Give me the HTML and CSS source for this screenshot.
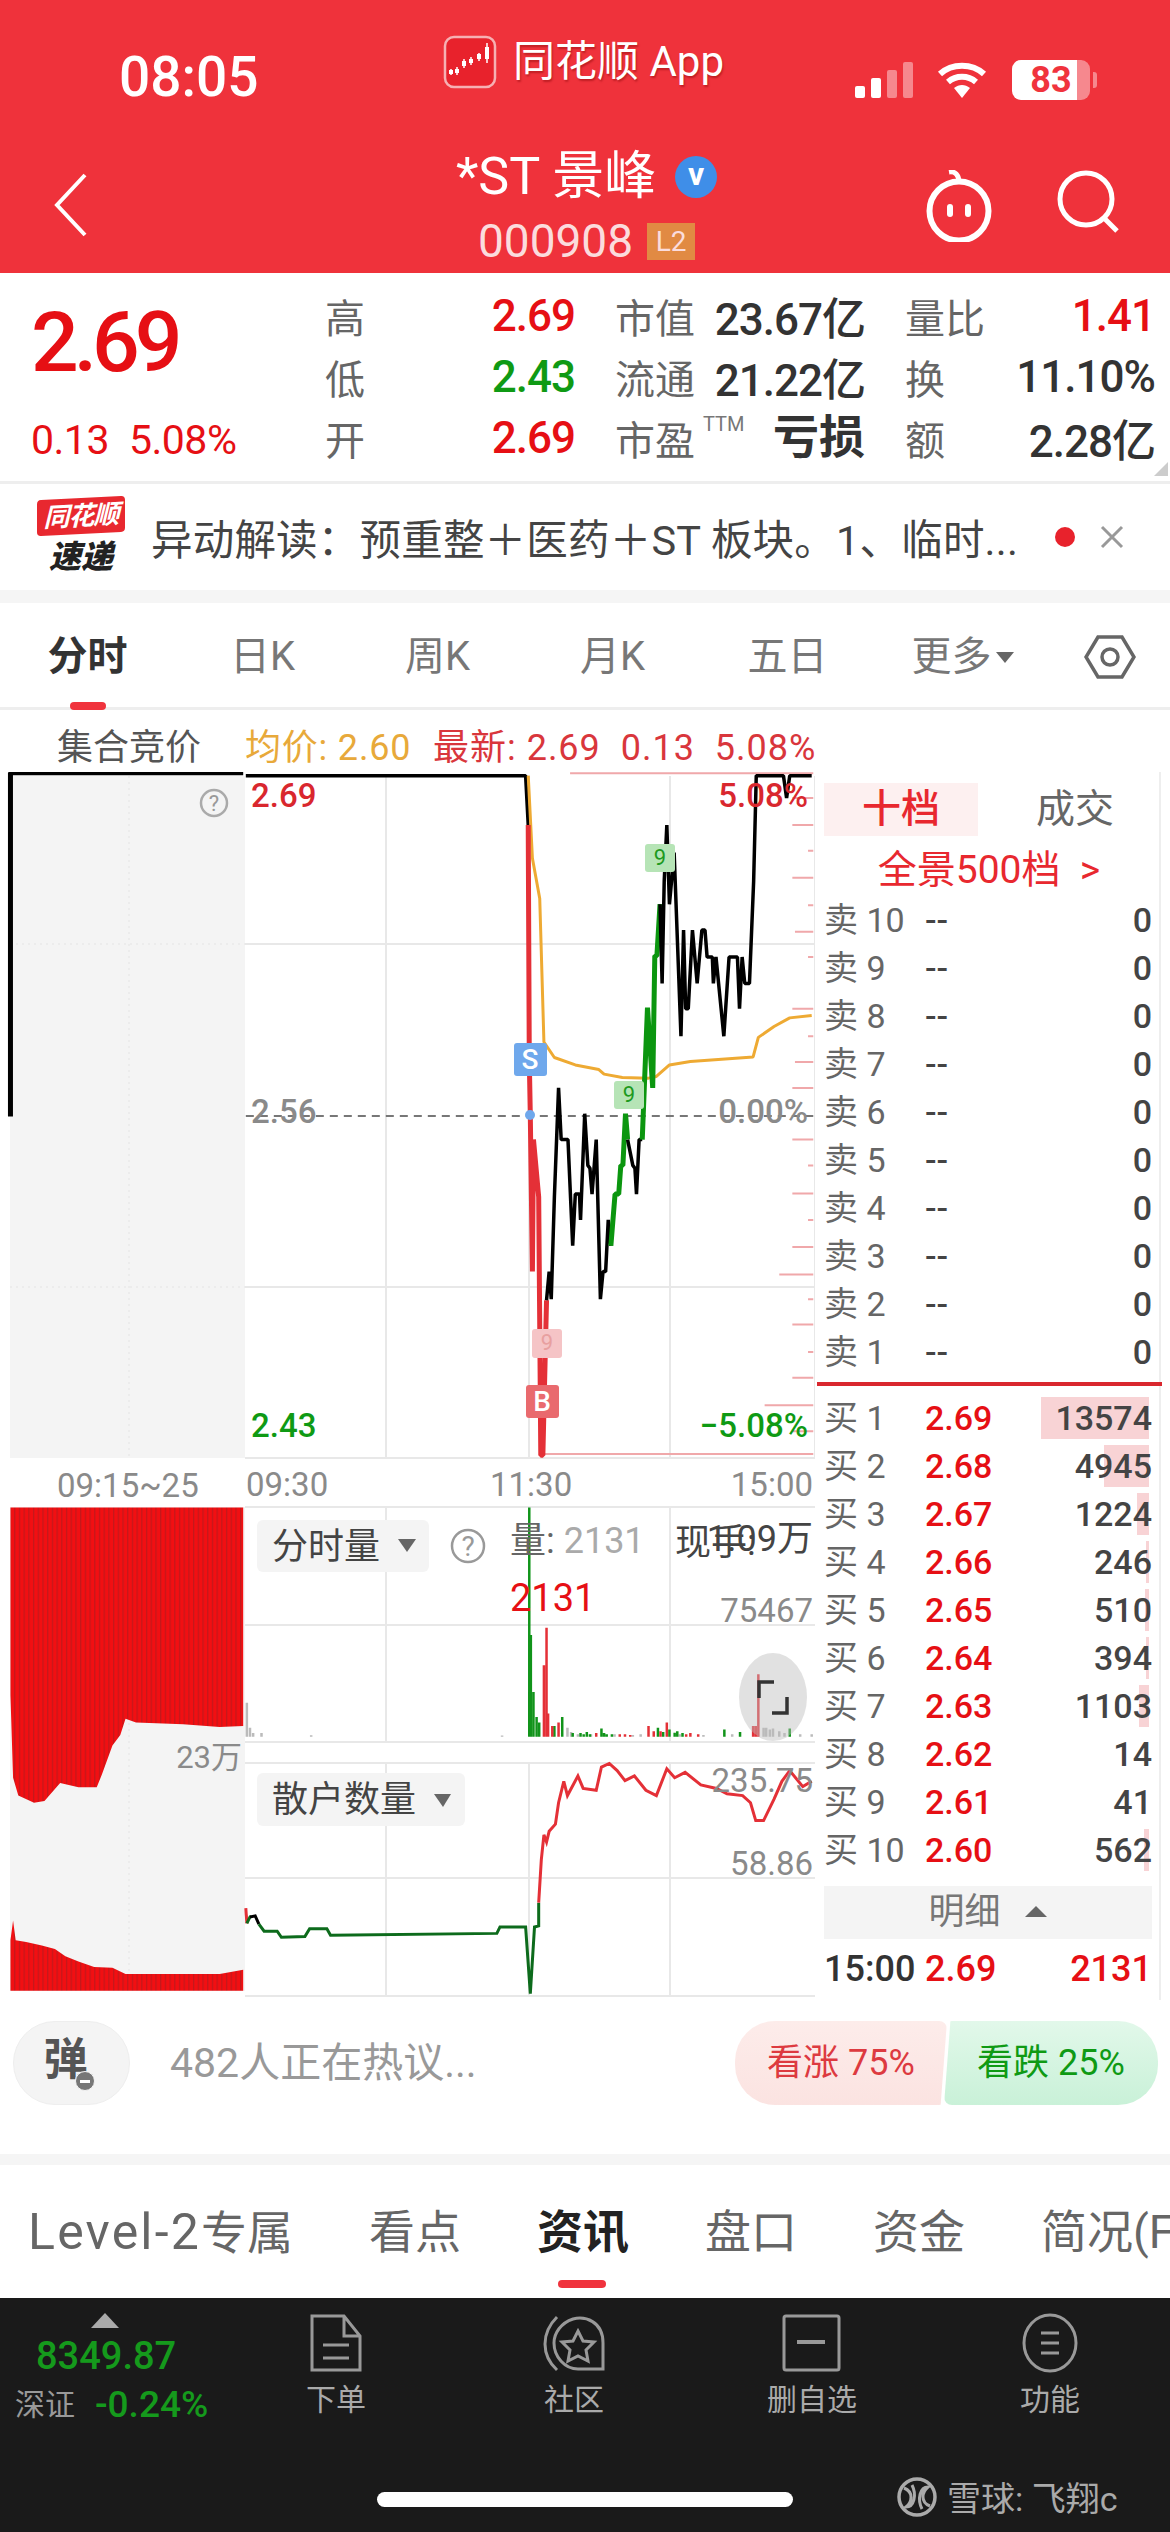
FILE: index.html
```html
<!DOCTYPE html>
<html lang="zh">
<head>
    <meta charset="utf-8" />
    <meta name="viewport" content="width=device-width, initial-scale=1" />
    <title>*ST景峰</title>
    <link rel="stylesheet" href="styles.css">
</head>
<body>
<div class="page">
    <header class="header">
        <div class="statusbar">
            <span class="clock">08:05</span>
            <div class="source">
                <svg class="source-logo" width="54" height="54" viewBox="0 0 54 54">
                    <rect x="2" y="2" width="50" height="50" rx="9" fill="#e8222c" stroke="#f6b0b3" stroke-width="2.5"/>
                    <path d="M8 34v6M14 32v8M21 24v9M28 22v8M36 18v8M44 8v20" stroke="#fff" stroke-width="1.5"/>
                    <path d="M6 35h4v4H6zM12 34h4v4h-4zM19 26h4v5h-4zM26 24h4v4h-4zM34 19h4v5h-4zM42 12h4v12h-4z" fill="#fff"/>
                </svg>
                <span class="source-name">同花顺 App</span>
            </div>
            <div class="status-icons">
                <svg width="58" height="36" viewBox="0 0 58 36">
                    <rect x="0" y="24" width="10" height="12" rx="2" fill="#fff"/>
                    <rect x="16" y="16" width="10" height="20" rx="2" fill="#fff"/>
                    <rect x="32" y="8" width="10" height="28" rx="2" fill="#f6888e"/>
                    <rect x="48" y="0" width="10" height="36" rx="2" fill="#f6888e"/>
                </svg>
                <svg class="wifi" width="50" height="38" viewBox="0 0 50 38">
                    <path d="M3 13C15 2 35 2 47 13M11 21c8-7 20-7 28 0" fill="none" stroke="#fff" stroke-width="6"/>
                    <path d="M17 27c5-4 11-4 16 0l-8 10z" fill="#fff"/>
                </svg>
                <div class="battery"><span class="battery-num">83</span></div>
            </div>
        </div>
        <div class="navbar">
            <svg class="back" width="36" height="66" viewBox="0 0 36 66">
                <path d="M32 3L4 33l28 30" fill="none" stroke="#fff" stroke-width="4"/>
            </svg>
            <div class="stock">
                <div class="stock-name">*ST 景峰 <span class="vbadge">v</span></div>
                <div class="stock-code">000908 <span class="l2">L2</span></div>
            </div>
            <svg class="robot" width="70" height="72" viewBox="0 0 70 72">
                <path d="M25 2c6-1 10 3 10 10" fill="none" stroke="#fff" stroke-width="5"/>
                <circle cx="35" cy="41" r="29.5" fill="none" stroke="#fff" stroke-width="6"/>
                <rect x="23" y="34" width="6" height="13" rx="3" fill="#fff"/>
                <rect x="41" y="34" width="6" height="13" rx="3" fill="#fff"/>
            </svg>
            <svg class="search" width="64" height="64" viewBox="0 0 64 64">
                <circle cx="30" cy="29" r="26" fill="none" stroke="#fff" stroke-width="5"/>
                <path d="M47 47l14 14" stroke="#fff" stroke-width="5"/>
            </svg>
        </div>
    </header>

    <section class="quote">
        <div class="quote-main">
            <div class="quote-price">2.69</div>
            <div class="quote-change"><span>0.13</span><span>5.08%</span></div>
        </div>
        <div class="quote-grid">
            <div class="cell"><span>高</span><b class="up">2.69</b></div>
            <div class="cell"><span>市值</span><b>23.67亿</b></div>
            <div class="cell"><span>量比</span><b class="up">1.41</b></div>
            <div class="cell"><span>低</span><b class="down">2.43</b></div>
            <div class="cell"><span>流通</span><b>21.22亿</b></div>
            <div class="cell"><span>换</span><b>11.10%</b></div>
            <div class="cell"><span>开</span><b class="up">2.69</b></div>
            <div class="cell"><span>市盈<sup class="ttm">TTM</sup></span><b class="loss">亏损</b></div>
            <div class="cell"><span>额</span><b>2.28亿</b></div>
        </div>
        <div class="corner"></div>
    </section>

    <section class="news">
        <div class="news-logo">
            <div class="news-flag">同花顺</div>
            <div class="news-speed">速递</div>
        </div>
        <div class="news-text">异动解读：预重整＋医药＋ST 板块。1、临时...</div>
        <span class="news-dot"></span>
        <svg class="news-close" width="24" height="24" viewBox="0 0 24 24">
            <path d="M2 2l20 20M22 2L2 22" stroke="#999" stroke-width="3"/>
        </svg>
    </section>
    <div class="gap"></div>

    <nav class="tabs">
        <a class="tab active">分时</a>
        <a class="tab">日K</a>
        <a class="tab">周K</a>
        <a class="tab">月K</a>
        <a class="tab">五日</a>
        <a class="tab">更多<i class="caret"></i></a>
        <a class="tab tab-icon">
            <svg width="52" height="46" viewBox="0 0 52 46">
                <path d="M14 3h24l12 20-12 20H14L2 23z" fill="none" stroke="#666" stroke-width="3.5"/>
                <circle cx="26" cy="23" r="8" fill="none" stroke="#666" stroke-width="3.5"/>
            </svg>
        </a>
    </nav>

    <div class="inforow">
        <span class="auction">集合竞价</span>
        <span class="avg">均价: 2.60</span>
        <span class="latest">最新: 2.69&nbsp; 0.13&nbsp; 5.08%</span>
    </div>

    <div class="chart-row">
        <svg class="chart" width="815" height="1228" viewBox="0 772 815 1228">
            <defs>
                <pattern id="stripes" patternUnits="userSpaceOnUse" width="9" height="10">
                    <rect width="9" height="10" fill="#f20f12"/>
                    <rect width="2.5" height="10" fill="#c4181b"/>
                </pattern>
            </defs>

            <!-- auction panel -->
            <rect x="10" y="776" width="235" height="682" fill="#f4f4f4"/>
            <rect x="10" y="1507" width="235" height="484" fill="#f4f4f4"/>
            <path class="grid" d="M245 944H815M245 1287H815M386 776V1458M529 776V1458M670 776V1458M245 1458H815M815 776V1458"/>
            <path class="grid-dot" d="M10 944H245M10 1287H245M129 776V1458M129 1507V1991"/>
            <path class="grid" d="M245 1507H815M245 1625H815M245 1742H815M245 1763H815M245 1878H815M245 1996H815M386 1507V1742M670 1507V1742M386 1763V1996M529 1763V1996M670 1763V1996"/>
            <circle cx="214" cy="803" r="13" fill="none" stroke="#aaa" stroke-width="2.5"/>
            <text class="qmark" x="214" y="811" text-anchor="middle">?</text>

            <!-- price panel, points traced at 0.523 x 0.574 -->
            <g transform="translate(0,600) scale(0.523,0.574)">
                <path class="tick" d="M1090 302H1555M1515 345H1555M1515 392H1555M1545 437H1555M1515 484H1555M1545 532H1555M1520 578H1555M1545 622H1555M1515 712H1555M1545 760H1555M1520 805H1555M1515 850H1555M1515 940H1555M1545 985H1555M1515 1034H1555M1545 1080H1555M1515 1127H1555M1490 1175H1555M1545 1218H1555M1515 1262H1555M1545 1310H1555M1515 1355H1555M1462 1403H1555M1515 1448H1555M1040 1488H1555"/>
                <polyline class="ln ln-black ln-thick" points="20,900 20,301 465,301"/>
                <polyline class="ln ln-black" points="470,306 1005,306 1010,392"/>
                <path class="dash" d="M470 899H1555"/>
                <polyline class="ln ln-avg" points="1010,306 1018,450 1032,520 1040,770 1060,797 1100,810 1145,818 1155,826 1190,832 1240,833 1255,830 1280,810 1320,804 1440,796 1450,762 1480,743 1510,728 1552,724"/>
                <polyline class="ln ln-red ln-thick" points="1010,392 1012,800 1014,900 1018,1170 1020,940 1030,1040 1034,1490 1038,1490 1045,1220"/>
                <polyline class="ln ln-black" points="1045,1220 1050,1170 1054,1218 1060,1040 1068,850 1073,940 1086,940 1095,1125 1100,1035 1108,1035 1110,1080 1118,895 1124,985 1128,990 1132,1035 1140,940 1148,1218 1153,1170 1158,1170 1163,1080 1168,1125"/>
                <polyline class="ln ln-green ln-thick" points="1168,1125 1176,1035 1183,1035 1187,985 1191,985 1196,895 1200,940"/>
                <polyline class="ln ln-black" points="1200,940 1210,985 1214,990 1217,1035 1222,940 1228,940"/>
                <polyline class="ln ln-green ln-thick" points="1228,940 1238,710 1248,850 1252,620 1256,620 1262,530"/>
                <polyline class="ln ln-black" points="1262,530 1266,668 1270,490 1275,392 1280,530 1289,440 1302,760 1307,575 1311,712 1316,712 1324,575 1333,668 1342,575 1348,575 1352,622 1362,622 1364,668 1369,622 1384,760 1394,622 1410,622 1414,712 1419,622 1424,668 1433,668 1441,490 1446,306 1498,306 1504,345 1510,306 1552,306"/>
            </g>
            <circle cx="530" cy="1115" r="5" fill="#6fa8ec"/>
            <rect x="514" y="1043" width="33" height="33" rx="3" fill="#6fa8ec"/>
            <text class="mark" x="530" y="1069" text-anchor="middle" fill="#fff">S</text>
            <rect x="532" y="1329" width="30" height="29" rx="3" fill="#f5c4c6"/>
            <text class="mark-small" x="547" y="1350" text-anchor="middle" fill="#e8a0a0">9</text>
            <rect x="526" y="1385" width="33" height="33" rx="3" fill="#e96a6e"/>
            <text class="mark" x="542" y="1411" text-anchor="middle" fill="#fff">B</text>
            <rect x="614" y="1081" width="30" height="28" rx="3" fill="#b6e4b6"/>
            <text class="mark-small" x="629" y="1102" text-anchor="middle" fill="#1e9a1e">9</text>
            <rect x="645" y="844" width="30" height="28" rx="3" fill="#b6e4b6"/>
            <text class="mark-small" x="660" y="865" text-anchor="middle" fill="#1e9a1e">9</text>

            <text class="lbl lbl-up" x="251" y="807">2.69</text>
            <text class="lbl lbl-gray" x="251" y="1123">2.56</text>
            <text class="lbl lbl-down" x="251" y="1437">2.43</text>
            <text class="lbl lbl-up" x="808" y="807" text-anchor="end">5.08%</text>
            <text class="lbl lbl-gray" x="808" y="1123" text-anchor="end">0.00%</text>
            <text class="lbl lbl-down" x="808" y="1437" text-anchor="end">−5.08%</text>

            <text class="time" x="57" y="1497">09:15~25</text>
            <text class="time" x="246" y="1496">09:30</text>
            <text class="time" x="490" y="1496">11:30</text>
            <text class="time" x="813" y="1496" text-anchor="end">15:00</text>

            <!-- auction volume, points traced at 0.523 x 0.357 -->
            <g transform="translate(0,1460) scale(0.523,0.357)">
                <polygon fill="url(#stripes)" points="20,133 465,133 465,745 420,748 350,740 260,735 240,725 230,770 215,800 195,880 185,917 150,917 115,905 100,930 85,955 65,960 35,940 25,890 20,660"/>
                <polygon fill="url(#stripes)" points="20,1487 20,1345 25,1290 30,1345 50,1350 80,1360 105,1370 125,1390 150,1405 180,1420 215,1422 240,1440 420,1440 465,1428 465,1487"/>

                <path class="bar bar-gray" d="M472 775V680M478 775V750M484 775V765M500 775V765M595 775V771M960 775V772M1085 775V750M1092 775V762M1105 775V768M1130 775V768M1175 775V768M1210 775V770M1225 775V768M1300 775V768M1345 775V770M1400 775V768M1460 775V750M1465 775V750M1472 775V755M1478 775V752M1490 775V760M1500 775V765M1530 775V768M1552 775V768"/>
                <path class="bar bar-green" d="M1012 775V133M1015 775V490M1020 775V650M1026 775V720M1031 775V735M1060 775V745M1075 775V720M1095 775V765M1110 775V765M1116 775V768M1122 775V762M1128 775V768M1150 775V752M1155 775V765M1160 775V768M1170 775V768M1258 775V750M1268 775V762M1280 775V755M1290 775V764M1295 775V760M1305 775V765M1385 775V755M1415 775V762M1510 775V752"/>
                <path class="bar bar-red" d="M1040 775V575M1045 775V470M1048 775V710M1056 775V745M1068 775V735M1140 775V765M1185 775V768M1195 775V768M1205 775V770M1240 775V745M1250 775V760M1263 775V760M1275 775V735M1312 775V768M1320 775V765M1335 775V768M1440 775V745M1445 775V745M1450 775V600"/>

                <polyline class="ln2 ln-red" points="470,1255 472,1298"/>
                <polyline class="ln2 ln-deep" points="472,1298 478,1280 480,1278"/>
                <polyline class="ln2 ln-black" points="478,1280 488,1277 495,1300"/>
                <polyline class="ln2 ln-deep" points="495,1300 505,1320 530,1320 538,1337 583,1335 592,1313 625,1313 632,1331 950,1326 956,1308 1005,1308 1014,1495 1022,1308 1030,1305 1030,1240"/>
                <polyline class="ln2 ln-red" points="1030,1240 1035,1120 1040,1050 1045,1070 1050,1040 1062,1020 1068,960 1078,900 1085,940 1105,885 1115,920 1140,925 1150,860 1165,850 1180,870 1195,898 1213,885 1235,925 1255,940 1275,865 1290,890 1310,875 1340,910 1370,920 1390,935 1420,940 1435,960 1445,1010 1460,1010 1480,950 1495,900 1510,870 1535,915 1552,900"/>
            </g>

            <text class="time small" x="242" y="1768" text-anchor="end">23万</text>

            <!-- volume panel overlay -->
            <rect class="pill" x="257" y="1520" width="172" height="52" rx="6"/>
            <text class="pill-text" x="272" y="1559">分时量</text>
            <path class="tri" d="M398 1539h18l-9 13z"/>
            <circle cx="468" cy="1546" r="16" fill="none" stroke="#999" stroke-width="2.5"/>
            <text class="qmark big" x="468" y="1556" text-anchor="middle">?</text>
            <text class="pill-text" x="510" y="1553"><tspan fill="#666">量:</tspan> <tspan fill="#aaa">2131</tspan></text>
            <text class="pill-text" x="675" y="1555" fill="#666">现手:</text>
            <text class="pill-text" x="813" y="1551" fill="#777" text-anchor="end">1.09万</text>
            <text class="vol-red" x="510" y="1611">2131</text>
            <text class="time" x="813" y="1622" text-anchor="end">75467</text>

            <ellipse cx="773" cy="1697" rx="34" ry="44" fill="#bdbdbd" fill-opacity="0.45"/>
            <path d="M759 1698v-16h15M787 1697v16h-15" fill="none" stroke="#333" stroke-width="3.5"/>

            <rect class="pill" x="257" y="1773" width="208" height="53" rx="6"/>
            <text class="pill-text" x="272" y="1812">散户数量</text>
            <path class="tri" d="M434 1794h17l-8 13z"/>
            <text class="time" x="813" y="1792" text-anchor="end">235.75</text>
            <text class="time" x="813" y="1875" text-anchor="end">58.86</text>
        </svg>

        <aside class="book">
            <div class="book-tabs">
                <span class="book-tab on">十档</span>
                <span class="book-tab">成交</span>
            </div>
            <div class="book-all">全景500档 &nbsp;&gt;</div>
            <div class="book-rows">
                <div class="brow"><span>卖 10</span><em>--</em><b>0</b></div>
                <div class="brow"><span>卖 9</span><em>--</em><b>0</b></div>
                <div class="brow"><span>卖 8</span><em>--</em><b>0</b></div>
                <div class="brow"><span>卖 7</span><em>--</em><b>0</b></div>
                <div class="brow"><span>卖 6</span><em>--</em><b>0</b></div>
                <div class="brow"><span>卖 5</span><em>--</em><b>0</b></div>
                <div class="brow"><span>卖 4</span><em>--</em><b>0</b></div>
                <div class="brow"><span>卖 3</span><em>--</em><b>0</b></div>
                <div class="brow"><span>卖 2</span><em>--</em><b>0</b></div>
                <div class="brow"><span>卖 1</span><em>--</em><b>0</b></div>
            </div>
            <div class="book-split"></div>
            <div class="book-rows">
                <div class="brow"><span>买 1</span><em class="up">2.69</em><b><i class="depth" style="width:108px"></i>13574</b></div>
                <div class="brow"><span>买 2</span><em class="up">2.68</em><b><i class="depth" style="width:45px"></i>4945</b></div>
                <div class="brow"><span>买 3</span><em class="up">2.67</em><b><i class="depth" style="width:12px"></i>1224</b></div>
                <div class="brow"><span>买 4</span><em class="up">2.66</em><b><i class="depth" style="width:3px"></i>246</b></div>
                <div class="brow"><span>买 5</span><em class="up">2.65</em><b><i class="depth" style="width:4px"></i>510</b></div>
                <div class="brow"><span>买 6</span><em class="up">2.64</em><b><i class="depth" style="width:3px"></i>394</b></div>
                <div class="brow"><span>买 7</span><em class="up">2.63</em><b><i class="depth" style="width:10px"></i>1103</b></div>
                <div class="brow"><span>买 8</span><em class="up">2.62</em><b>14</b></div>
                <div class="brow"><span>买 9</span><em class="up">2.61</em><b>41</b></div>
                <div class="brow"><span>买 10</span><em class="up">2.60</em><b><i class="depth" style="width:5px"></i>562</b></div>
            </div>
            <div class="book-detail">明细 <i class="caret-up"></i></div>
            <div class="book-last"><span>15:00</span><em class="up">2.69</em><b class="up">2131</b></div>
        </aside>
    </div>

    <section class="discuss">
        <div class="danmu">弹<span class="danmu-off"></span></div>
        <div class="discuss-text">482人正在热议...</div>
        <div class="vote vote-up">看涨 75%</div>
        <div class="vote vote-down">看跌 25%</div>
    </section>
    <div class="gap gap-sub"></div>

    <nav class="subtabs">
        <a class="subtab"><span class="latin">Level-2</span>专属</a>
        <a class="subtab">看点</a>
        <a class="subtab active">资讯</a>
        <a class="subtab">盘口</a>
        <a class="subtab">资金</a>
        <a class="subtab">简况(F10)</a>
    </nav>

    <footer class="footer">
        <div class="index">
            <i class="index-arrow"></i>
            <div class="index-value">8349.87</div>
            <div class="index-line"><span>深证</span><b>-0.24%</b></div>
        </div>
        <a class="action">
            <svg width="54" height="60" viewBox="0 0 54 60">
                <path d="M3 3h32l16 20v34H3z M35 3v20h16" fill="none" stroke="#999" stroke-width="3"/>
                <path d="M14 32h26M14 45h26" stroke="#999" stroke-width="3"/>
            </svg>
            <span>下单</span>
        </a>
        <a class="action">
            <svg width="62" height="60" viewBox="0 0 62 60">
                <path d="M14 4C-2 20-2 42 14 57" fill="none" stroke="#999" stroke-width="3"/>
                <path d="M60 52V30C60 8 42 3 30 6 18 10 11 20 11 30c0 14 11 26 24 26h25z" fill="none" stroke="#999" stroke-width="3"/>
                <path d="M35 18l5 10 11 1-8 8 2 11-10-5-10 5 2-11-8-8 11-1z" fill="none" stroke="#999" stroke-width="3"/>
            </svg>
            <span>社区</span>
        </a>
        <a class="action">
            <svg width="60" height="60" viewBox="0 0 60 60">
                <rect x="2" y="3" width="55" height="54" rx="2" fill="none" stroke="#999" stroke-width="3"/>
                <path d="M15 29h28" stroke="#999" stroke-width="4"/>
            </svg>
            <span>删自选</span>
        </a>
        <a class="action">
            <svg width="56" height="60" viewBox="0 0 56 60">
                <ellipse cx="28" cy="30" rx="26" ry="28" fill="none" stroke="#999" stroke-width="3"/>
                <path d="M19 20h18M19 30h18M19 40h18" stroke="#999" stroke-width="3"/>
            </svg>
            <span>功能</span>
        </a>
        <div class="homebar"></div>
        <div class="watermark">
            <svg width="40" height="42" viewBox="0 0 40 42">
                <circle cx="20" cy="21" r="18" fill="none" stroke="#aaa" stroke-width="3.5"/>
                <path d="M7 12c10 4 8 14 2 19 8 0 11-12 6-22M33 30c-10-4-8-14-2-19-8 0-11 12-6 22" fill="none" stroke="#aaa" stroke-width="3"/>
            </svg>
            <span>雪球: 飞翔c</span>
        </div>
    </footer>
</div>
</body>
</html>
```

FILE: styles.css
```css
* {
    box-sizing: border-box;
}
html, body {
    margin: 0;
    padding: 0;
}
html {
    background: #fff;
}
body {
    font-family: Roboto, "Noto Sans CJK SC", sans-serif;
    color: #333;
}
a {
    text-decoration: none;
}
em, i {
    font-style: normal;
}
.page {
    width: 1170px;
    height: 2532px;
    overflow: hidden;
}
.up {
    color: #e60f14;
}
.down {
    color: #0f9a14;
}

/* header */
.header {
    height: 273px;
    background: #ef323b;
    color: #fff;
}
.statusbar {
    height: 130px;
    display: flex;
    align-items: flex-start;
    position: relative;
}
.clock {
    font-size: 55px;
    font-weight: 500;
    margin: 47px 0 0 119px;
    line-height: 60px;
    width: 324px;
}
.source {
    display: flex;
    align-items: center;
    gap: 16px;
    margin-top: 35px;
    width: 412px;
}
.source-name {
    font-size: 42px;
    line-height: 54px;
    text-shadow: 1px 2px 2px rgba(120, 0, 0, 0.4);
}
.status-icons {
    display: flex;
    align-items: center;
    margin-top: 60px;
    gap: 24px;
}
.battery {
    width: 78px;
    height: 40px;
    background: linear-gradient(90deg, #fff 83%, #f6888e 83%);
    border-radius: 9px;
    color: #f0333d;
    text-align: center;
    font-size: 36px;
    font-weight: 700;
    line-height: 40px;
    position: relative;
    margin-left: 1px;
}
.battery::after {
    content: "";
    position: absolute;
    right: -7px;
    top: 12px;
    width: 4px;
    height: 16px;
    background: #f6888e;
    border-radius: 0 3px 3px 0;
}
.navbar {
    height: 143px;
    display: flex;
    align-items: flex-start;
    position: relative;
}
.back {
    margin: 42px 0 0 53px;
    flex: none;
}
.stock {
    flex: none;
    width: 836px;
    padding: 15px 22px 0 181px;
    text-align: center;
}
.stock-name {
    font-size: 52px;
    line-height: 64px;
    display: flex;
    justify-content: center;
    align-items: center;
    gap: 6px;
    white-space: pre;
}
.vbadge {
    width: 42px;
    height: 42px;
    border-radius: 50%;
    background: #3f8ee8;
    font-size: 32px;
    font-weight: 700;
    line-height: 36px;
    text-align: center;
}
.stock-code {
    font-size: 46px;
    line-height: 56px;
    margin-top: 4px;
    color: #fbdcdd;
    display: flex;
    justify-content: center;
    align-items: center;
    gap: 14px;
}
.l2 {
    width: 48px;
    height: 37px;
    background: #e18a43;
    font-size: 28px;
    line-height: 37px;
    color: #fbdcdd;
}
.robot {
    margin: 40px 0 0 -1px;
    flex: none;
}
.search {
    margin: 40px 0 0 62px;
    flex: none;
}

/* quote */
.quote {
    height: 211px;
    border-bottom: 3px solid #eee;
    display: flex;
    position: relative;
}
.quote-main {
    width: 325px;
    padding: 28px 0 0 31px;
    color: #e60f14;
}
.quote-price {
    font-size: 84px;
    line-height: 84px;
    font-weight: 500;
    letter-spacing: -5px;
}
.quote-change {
    display: flex;
    gap: 20px;
    font-size: 41px;
    line-height: 46px;
    margin-top: 32px;
    letter-spacing: -0.5px;
}
.quote-grid {
    width: 830px;
    padding-top: 12px;
    display: grid;
    grid-template-columns: repeat(3, 250px);
    grid-auto-rows: 61px;
    column-gap: 40px;
}
.cell {
    display: flex;
    justify-content: space-between;
    align-items: center;
    font-size: 40px;
    color: #666;
}
.cell b {
    font-size: 44px;
    font-weight: 500;
    color: #333;
    letter-spacing: -1px;
}
.cell b.up {
    color: #e60f14;
}
.cell b.down {
    color: #0f9a14;
}
.cell b.loss {
    font-size: 46px;
    font-weight: 700;
    margin-top: -10px;
    letter-spacing: 0;
}
.ttm {
    font-size: 20px;
    vertical-align: 24px;
    line-height: 0;
    margin-left: 8px;
    color: #777;
}
.corner {
    position: absolute;
    right: 2px;
    bottom: 5px;
    width: 14px;
    height: 14px;
    background: #ccc;
    clip-path: polygon(100% 0, 100% 100%, 0 100%);
}

/* news ticker */
.news {
    height: 106px;
    display: flex;
    align-items: center;
    padding-left: 37px;
}
.news-logo {
    width: 88px;
    text-align: center;
    flex: none;
}
.news-flag {
    background: #e8282f;
    color: #fff;
    font-size: 26px;
    font-weight: 700;
    font-style: italic;
    line-height: 36px;
    height: 36px;
    border-radius: 4px;
    transform: skewY(-3deg);
    letter-spacing: -1px;
}
.news-speed {
    font-size: 32px;
    font-weight: 900;
    font-style: italic;
    color: #222;
    line-height: 38px;
    margin-top: 4px;
}
.news-text {
    font-size: 41.5px;
    color: #444;
    margin-left: 26px;
    width: 886px;
    white-space: nowrap;
    letter-spacing: 0.2px;
}
.news-dot {
    width: 20px;
    height: 20px;
    background: #e8222c;
    border-radius: 50%;
    flex: none;
    margin-left: 18px;
}
.news-close {
    flex: none;
    margin-left: 25px;
}
.gap {
    height: 13px;
    background: #f5f5f5;
}

/* period tabs */
.tabs {
    height: 107px;
    display: flex;
    border-bottom: 3px solid #eee;
    position: relative;
}
.tab {
    width: 175px;
    text-align: center;
    font-size: 40px;
    line-height: 108px;
    color: #777;
    position: relative;
    white-space: nowrap;
}
.tab.active {
    color: #333;
    font-weight: 700;
}
.tab.active::after {
    content: "";
    position: absolute;
    left: 70px;
    bottom: -3px;
    width: 36px;
    height: 8px;
    background: #f0333d;
    border-radius: 4px;
}
.tab-icon {
    width: 120px;
    padding-top: 31px;
    line-height: 0;
}
.caret {
    display: inline-block;
    border: 9px solid transparent;
    border-top: 11px solid #666;
    border-bottom: 0;
    margin-left: 4px;
    vertical-align: 7px;
}

/* info row */
.inforow {
    height: 62px;
    display: flex;
    align-items: center;
    font-size: 36px;
    white-space: nowrap;
    padding-top: 6px;
}
.auction {
    width: 245px;
    padding-left: 57px;
    color: #555;
}
.avg {
    color: #e8a93a;
    width: 188px;
    letter-spacing: 0.8px;
}
.latest {
    color: #d9363c;
    letter-spacing: 1px;
}

/* chart */
.chart-row {
    height: 1228px;
    display: flex;
}
.chart {
    display: block;
    flex: none;
}
.chart text {
    font-family: Roboto, "Noto Sans CJK SC", sans-serif;
}
.grid {
    fill: none;
    stroke: #e8e8e8;
    stroke-width: 2;
}
.grid-dot {
    fill: none;
    stroke: #ececec;
    stroke-width: 2;
    stroke-dasharray: 2 4;
}
.tick {
    fill: none;
    stroke: #f0a8aa;
    stroke-width: 2;
    vector-effect: non-scaling-stroke;
}
.dash {
    fill: none;
    stroke: #777;
    stroke-width: 2;
    stroke-dasharray: 8 6;
    vector-effect: non-scaling-stroke;
}
.ln {
    fill: none;
    stroke-width: 3.5;
    stroke-linejoin: bevel;
    vector-effect: non-scaling-stroke;
}
.ln-thick {
    stroke-width: 5;
}
.ln2 {
    fill: none;
    stroke-width: 3;
    vector-effect: non-scaling-stroke;
}
.ln-black {
    stroke: #000;
}
.ln-avg {
    stroke: #eeaa33;
    stroke-width: 3;
}
.ln-red {
    stroke: #e43037;
}
.ln-green {
    stroke: #0b960f;
}
.ln-deep {
    stroke: #0d6b1c;
}
.bar {
    fill: none;
    stroke-width: 2.5;
    vector-effect: non-scaling-stroke;
}
.bar-gray {
    stroke: #bbb;
}
.bar-green {
    stroke: #11941a;
}
.bar-red {
    stroke: #e43037;
}
.lbl {
    font-size: 33px;
    font-weight: 500;
}
.lbl-up {
    fill: #d9272e;
}
.lbl-down {
    fill: #0f9a14;
}
.lbl-gray {
    fill: #8a8a8a;
}
.time {
    font-size: 33px;
    fill: #8a8a8a;
}
.time.small {
    font-size: 31px;
}
.qmark {
    font-size: 22px;
    fill: #999;
}
.qmark.big {
    font-size: 28px;
}
.mark {
    font-size: 28px;
    font-weight: 500;
}
.mark-small {
    font-size: 22px;
}
.pill {
    fill: #f4f4f4;
}
.pill-text {
    font-size: 36px;
    fill: #444;
}
.tri {
    fill: #666;
}
.vol-red {
    font-size: 38px;
    fill: #e60f14;
}

/* order book */
.book {
    width: 355px;
    padding: 11px 18px 0 9px;
    background: linear-gradient(#eee, #eee) 344px 0 / 2px 100% no-repeat;
}
.book-tabs {
    display: flex;
    height: 53px;
    font-size: 39px;
    line-height: 53px;
    color: #666;
    text-align: center;
}
.book-tab {
    flex: 1;
}
.book-tab.on {
    flex: none;
    width: 154px;
    background: #fdf0f0;
    color: #e8282f;
    font-weight: 500;
    margin-right: 20px;
}
.book-all {
    font-size: 39px;
    line-height: 68px;
    height: 60px;
    text-align: center;
    color: #e8282f;
    padding-left: 2px;
}
.brow {
    display: grid;
    grid-template-columns: 101px 90px 1fr;
    height: 48px;
    line-height: 48px;
    font-size: 34px;
    white-space: nowrap;
    position: relative;
}
.brow span {
    color: #666;
}
.brow em {
    color: #444;
    font-weight: 500;
}
.brow em.up {
    color: #e60f14;
}
.brow b {
    font-weight: 500;
    text-align: right;
    color: #444;
    position: relative;
}
.depth {
    position: absolute;
    right: 3px;
    top: 3px;
    height: 42px;
    background: #f8d3d5;
    z-index: -1;
}
.book-split {
    height: 4px;
    background: #d9272e;
    margin: 6px -10px 8px -7px;
}
.book-detail {
    height: 53px;
    margin-top: 12px;
    background: #f4f4f4;
    color: #777;
    font-size: 36px;
    line-height: 53px;
    text-align: center;
}
.caret-up {
    display: inline-block;
    border: 11px solid transparent;
    border-bottom: 11px solid #666;
    border-top: 0;
    margin-left: 16px;
    vertical-align: 7px;
}
.book-last {
    display: grid;
    grid-template-columns: 101px 90px 1fr;
    font-size: 36px;
    line-height: 60px;
    font-weight: 500;
    white-space: nowrap;
}
.book-last span {
    color: #333;
}
.book-last b {
    text-align: right;
    font-weight: 500;
}

/* discuss bar */
.discuss {
    height: 154px;
    display: flex;
    padding-top: 21px;
    align-items: flex-start;
}
.danmu {
    width: 117px;
    height: 84px;
    margin-left: 13px;
    background: #f4f4f4;
    border: 1px solid #eee;
    border-radius: 42px;
    font-size: 44px;
    font-weight: 700;
    line-height: 76px;
    color: #555;
    text-align: center;
    padding-right: 12px;
    position: relative;
}
.danmu-off {
    position: absolute;
    right: 34px;
    top: 49px;
    width: 20px;
    height: 20px;
    background: #777;
    border-radius: 50%;
    border: 1px solid #f4f4f4;
}
.danmu-off::after {
    content: "";
    position: absolute;
    left: 4px;
    top: 8px;
    width: 10px;
    height: 3px;
    background: #fff;
}
.discuss-text {
    width: 605px;
    padding-left: 40px;
    font-size: 41px;
    line-height: 84px;
    color: #999;
}
.vote {
    height: 84px;
    font-size: 36px;
    line-height: 84px;
    text-align: center;
    white-space: nowrap;
}
.vote-up {
    width: 212px;
    background: linear-gradient(180deg, #fdecea, #fbe3e1);
    color: #dd3a40;
    border-radius: 40px 8px 8px 40px;
    clip-path: polygon(0 0, 100% 0, 97% 100%, 0 100%);
}
.vote-down {
    width: 214px;
    margin-left: -3px;
    background: linear-gradient(180deg, #e2f8ea, #c9f1d8);
    color: #0f9a14;
    border-radius: 8px 40px 40px 8px;
    clip-path: polygon(3% 0, 100% 0, 100% 100%, 0 100%);
}
.gap-sub {
    height: 11px;
}

/* sub tabs */
.subtabs {
    height: 133px;
    display: flex;
    gap: 76px;
    padding-left: 28px;
    white-space: nowrap;
    overflow: hidden;
}
.subtab {
    font-size: 46px;
    line-height: 135px;
    color: #666;
    position: relative;
    flex: none;
}
.latin {
    font-size: 50px;
    letter-spacing: 2.2px;
}
.subtab.active {
    color: #222;
    font-weight: 700;
}
.subtab.active::after {
    content: "";
    position: absolute;
    left: 21px;
    top: 115px;
    width: 48px;
    height: 8px;
    background: #f0333d;
    border-radius: 4px;
}

/* footer */
.footer {
    height: 234px;
    background: #1a1a1a;
    display: flex;
    position: relative;
}
.index {
    width: 217px;
    flex: none;
    padding: 15px 0 0 15px;
}
.index-arrow {
    display: block;
    width: 0;
    margin-left: 76px;
    border: 14px solid transparent;
    border-bottom: 15px solid #aaa;
    border-top: 0;
}
.index-value {
    font-size: 38px;
    font-weight: 500;
    line-height: 44px;
    color: #159a1c;
    margin: 6px 0 0 21px;
}
.index-line {
    display: flex;
    align-items: center;
    gap: 20px;
    font-size: 30px;
    line-height: 44px;
    color: #999;
    margin-top: 5px;
}
.index-line b {
    font-size: 37px;
    font-weight: 500;
    color: #159a1c;
}
.action {
    width: 238px;
    flex: none;
    display: flex;
    flex-direction: column;
    align-items: center;
    padding-top: 15px;
    font-size: 30px;
    color: #aaa;
    line-height: 44px;
    gap: 5px;
}
.homebar {
    position: absolute;
    left: 377px;
    top: 194px;
    width: 416px;
    height: 15px;
    background: #fff;
    border-radius: 8px;
}
.watermark {
    position: absolute;
    left: 897px;
    top: 174px;
    display: flex;
    align-items: center;
    gap: 10px;
    font-size: 34px;
    color: #aaa;
    white-space: nowrap;
}
```
